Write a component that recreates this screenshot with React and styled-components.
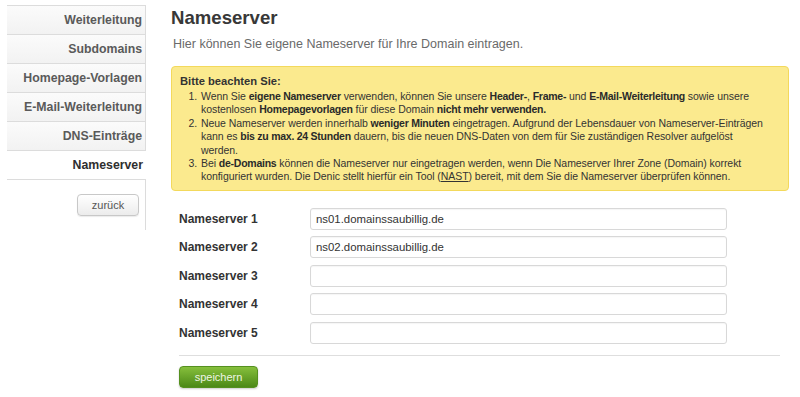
import React from "react";
import styled, { createGlobalStyle } from "styled-components";

const GlobalStyle = createGlobalStyle`
  body {
    margin: 0;
    background: #fff;
    font-family: "Liberation Sans", Arial, sans-serif;
    color: #333;
  }
`;

const menu = [
    "Weiterleitung",
    "Subdomains",
    "Homepage-Vorlagen",
    "E-Mail-Weiterleitung",
    "DNS-Einträge",
    "Nameserver",
];

const servers = ["ns01.domainssaubillig.de", "ns02.domainssaubillig.de", "", "", ""];

export default class App extends React.Component {
    render() {
        return (
            <Page>
                <GlobalStyle />
                <Sidebar>
                    {menu.map(item => (
                        <MenuItem key={item} active={item === "Nameserver"}>
                            {item}
                        </MenuItem>
                    ))}
                    <SideFooter>
                        <BackButton>zurück</BackButton>
                    </SideFooter>
                </Sidebar>

                <Main>
                    <Title>Nameserver</Title>
                    <Lead>Hier können Sie eigene Nameserver für Ihre Domain eintragen.</Lead>

                    <Notice>
                        <NoticeTitle>Bitte beachten Sie:</NoticeTitle>
                        <NoticeList>
                            <li>
                                Wenn Sie <b>eigene Nameserver</b> verwenden, können Sie unsere <b>Header-</b>,{" "}
                                <b>Frame-</b> und <b>E-Mail-Weiterleitung</b> sowie unsere
                                <br />
                                kostenlosen <b>Homepagevorlagen</b> für diese Domain <b>nicht mehr verwenden.</b>
                            </li>
                            <li>
                                Neue Nameserver werden innerhalb <b>weniger Minuten</b> eingetragen. Aufgrund der
                                Lebensdauer von Nameserver-Einträgen
                                <br />
                                kann es <b>bis zu max. 24 Stunden</b> dauern, bis die neuen DNS-Daten von dem für Sie
                                zuständigen Resolver aufgelöst
                                <br />
                                werden.
                            </li>
                            <li>
                                Bei <b>de-Domains</b> können die Nameserver nur eingetragen werden, wenn Die
                                Nameserver Ihrer Zone (Domain) korrekt
                                <br />
                                konfiguriert wurden. Die Denic stellt hierfür ein Tool (<NastLink>NAST</NastLink>)
                                bereit, mit dem Sie die Nameserver überprüfen können.
                            </li>
                        </NoticeList>
                    </Notice>

                    <Form>
                        {servers.map((value, i) => (
                            <FormRow key={i}>
                                <Label>Nameserver {i + 1}</Label>
                                <Input defaultValue={value} />
                            </FormRow>
                        ))}
                        <Divider />
                        <SaveButton>speichern</SaveButton>
                    </Form>
                </Main>
            </Page>
        );
    }
}

const Page = styled.div`
    display: flex;
    align-items: flex-start;
    width: 800px;
    height: 397px;
`;

const Sidebar = styled.nav`
    display: flex;
    flex-direction: column;
    width: 138px;
    margin: 5px 0 0 7px;
    border-right: 1px solid #dcdcdc;
`;

const MenuItem = styled.div`
    height: 28px;
    line-height: 28px;
    border-top: 1px solid #dcdcdc;
    padding-right: 3px;
    text-align: right;
    font-size: 12.3px;
    font-weight: bold;
    color: ${p => (p.active ? "#2e2e2e" : "#5a5a5a")};
    background: ${p => (p.active ? "#fff" : "linear-gradient(#fbfbfb, #f2f2f2)")};
    margin-right: ${p => (p.active ? "-1px" : "0")};
`;

const SideFooter = styled.div`
    display: flex;
    justify-content: flex-end;
    height: 36px;
    padding: 14px 6px 0 0;
    border-top: 1px solid #dcdcdc;
`;

const BackButton = styled.button`
    width: 62px;
    height: 22px;
    padding: 0;
    border: 1px solid #c8c8c8;
    border-radius: 4px;
    background: linear-gradient(#ffffff, #ececec);
    box-shadow: 0 1px 1px rgba(0, 0, 0, 0.08);
    font-family: "Liberation Sans", Arial, sans-serif;
    font-size: 11px;
    color: #555;
`;

const Main = styled.main`
    flex: 1;
    padding: 6px 11px 0 25px;
`;

const Title = styled.h1`
    margin: 0;
    font-size: 18.6px;
    line-height: 24px;
    font-weight: bold;
    color: #383838;
`;

const Lead = styled.p`
    margin: 6px 0 0 2px;
    font-size: 12.5px;
    line-height: 16px;
    color: #6a6a6a;
`;

const Notice = styled.div`
    margin-top: 14px;
    padding: 6px 10px 6px 8px;
    background: #fbea8e;
    border: 1px solid #f3d95c;
    border-radius: 4px;
    color: #333;
`;

const NoticeTitle = styled.div`
    font-size: 11.2px;
    line-height: 16px;
    font-weight: bold;
`;

const NoticeList = styled.ol`
    margin: 1px 0 0;
    padding-left: 20px;
    font-size: 10.5px;
    line-height: 13.4px;
    letter-spacing: -0.06px;

    li {
        padding-left: 1px;
    }

    b {
        font-weight: bold;
        letter-spacing: -0.25px;
        color: #2a2a2a;
    }
`;

const NastLink = styled.span`
    text-decoration: underline;
`;

const Form = styled.div`
    display: flex;
    flex-direction: column;
    gap: 6.5px;
    margin: 17px 0 0 8px;
`;

const FormRow = styled.div`
    display: grid;
    grid-template-columns: 131px 417px;
    align-items: center;
`;

const Label = styled.label`
    font-size: 12px;
    font-weight: bold;
    color: #333;
`;

const Input = styled.input`
    box-sizing: border-box;
    height: 22px;
    padding: 0 5px;
    border: 1px solid #d8d8d8;
    border-radius: 3px;
    box-shadow: inset 0 1px 1px rgba(0, 0, 0, 0.04);
    font-family: "Liberation Sans", Arial, sans-serif;
    font-size: 11.4px;
    color: #333;
    outline: none;
`;

const Divider = styled.hr`
    width: 601px;
    margin: 4.5px 0 3.5px;
    border: none;
    border-top: 1px solid #dedede;
`;

const SaveButton = styled.button`
    width: 79px;
    height: 22px;
    padding: 0;
    border: 1px solid #55901f;
    border-radius: 4px;
    background: linear-gradient(#86bf3c, #4c8917);
    box-shadow: 0 1px 2px rgba(0, 0, 0, 0.2);
    font-family: "Liberation Sans", Arial, sans-serif;
    font-size: 11px;
    color: #eef6e4;
`;
